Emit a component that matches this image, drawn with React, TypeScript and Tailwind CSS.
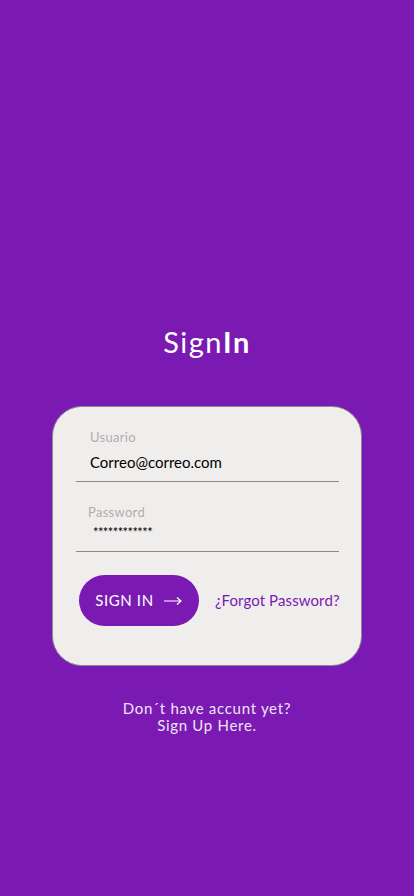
export default function App() {
  return (
    <div
      className="w-full min-h-[896px] bg-[#7a1ab3] flex flex-col items-center"
      style={{ fontFamily: "Lato, 'Open Sans', sans-serif" }}
    >
      <h1 className="mt-[322px] text-[29px] leading-[40px] tracking-[1.5px] text-white">
        Sign<span className="font-bold">In</span>
      </h1>

      <div className="mt-[44px] w-[310px] h-[260px] bg-[#f0eeed] rounded-[30px] border border-[#8e8a8c] px-[23px] pt-[22px]">
        <div className="flex flex-col">
          <label className="ml-[14px] text-[13px] leading-[16px] tracking-[0.3px] text-[#b1adad]">Usuario</label>
          <div className="ml-[14px] mt-[8px] text-[15px] leading-[18px] text-black">Correo@correo.com</div>
          <div className="mt-[10px] h-px w-[263px] bg-[#8a8a8a]" />

          <label className="ml-[12px] mt-[22px] text-[13px] leading-[16px] tracking-[0.3px] text-[#b1adad]">Password</label>
          <div className="ml-[17px] mt-[5px] text-[13px] leading-[15px] text-black tracking-[-0.6px]">************</div>
          <div className="mt-[11px] h-px w-[263px] bg-[#8a8a8a]" />
        </div>

        <div className="mt-[23px] flex items-center">
          <button className="shrink-0 ml-[3px] w-[120px] h-[51px] rounded-full bg-[#7a1ab3] text-white text-[15px] tracking-[0.6px] flex items-center justify-center gap-[9px]">
            <span>SIGN IN</span>
            <svg width="20" height="10" viewBox="0 0 20 10" fill="none" stroke="white" strokeWidth="1.2">
              <path d="M1 5h17M14 1.5 18 5l-4 3.5" />
            </svg>
          </button>
          <span className="ml-[16px] whitespace-nowrap text-[15px] tracking-[0.1px] text-[#7a1ab3]">¿Forgot Password?</span>
        </div>
      </div>

      <div className="mt-[34px] text-center text-[15px] leading-[17px] tracking-[0.7px] text-[#efe4f5]">
        <div>Don´t have accunt yet?</div>
        <div>Sign Up Here.</div>
      </div>
    </div>
  );
}
